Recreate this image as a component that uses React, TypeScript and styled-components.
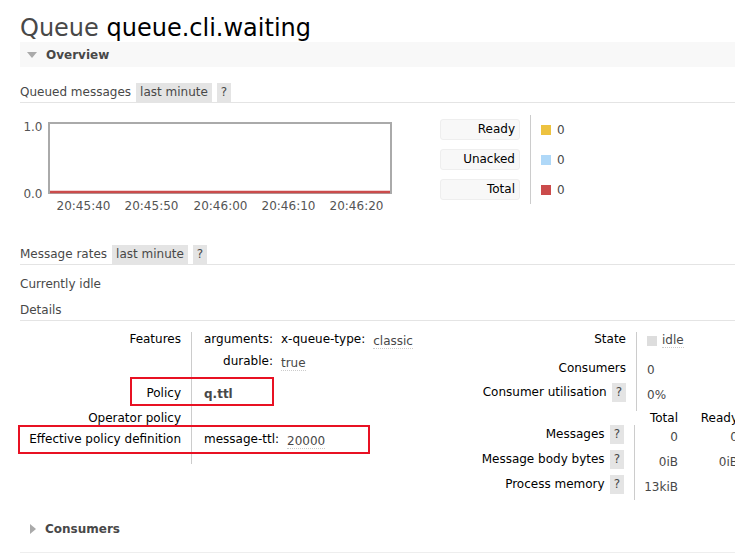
import React from "react";
import styled, { createGlobalStyle } from "styled-components";

const Global = createGlobalStyle`
  html, body { margin: 0; padding: 0; background: #fff; }
  body {
    font-family: "DejaVu Sans", Verdana, sans-serif;
    font-size: 12px;
    color: #484848;
    overflow: hidden;
  }
  * { box-sizing: border-box; }
`;

const Page = styled.div`
  width: 800px;
  padding-left: 20px;
`;

const Title = styled.h1`
  margin: 15px 0 0;
  font-size: 24px;
  line-height: 27px;
  font-weight: normal;
  color: #484848;
`;

const TitleName = styled.span`
  color: #000;
`;

const SectionHead = styled.h2<{ $open?: boolean }>`
  margin: 0;
  height: 25px;
  display: flex;
  align-items: center;
  gap: 9px;
  padding-left: ${(p) => (p.$open ? 7 : 10)}px;
  background: ${(p) => (p.$open ? "#f8f8f8" : "transparent")};
  font-size: 12px;
  line-height: 14px;
  font-weight: bold;
  color: #484848;
`;

const Arrow = styled.span<{ $open?: boolean }>`
  width: 0;
  height: 0;
  border-style: solid;
  ${(p) =>
    p.$open
      ? "border-width: 6px 5px 0 5px; border-color: #aaa transparent transparent transparent;"
      : "border-width: 5.5px 0 5.5px 6px; border-color: transparent transparent transparent #aaa;"}
`;

const SubHead = styled.h3<{ $mt: number }>`
  margin: ${(p) => p.$mt}px 0 0;
  display: flex;
  align-items: center;
  gap: 5px;
  font-size: 12px;
  font-weight: normal;
  line-height: 19px;
  color: #484848;
  border-bottom: 1px solid #e4e4e4;
`;

const Pill = styled.span`
  display: inline-block;
  height: 19px;
  line-height: 19px;
  padding: 0 4px;
  background: #e4e4e4;
  color: #484848;
`;

const Para = styled.p<{ $mt: number }>`
  margin: ${(p) => p.$mt}px 0 0;
  line-height: 14px;
`;

const ChartRow = styled.div`
  display: flex;
  align-items: flex-start;
  gap: 48px;
  margin-top: 12px;
`;

const Legend = styled.div`
  display: flex;
`;

const LegendLabels = styled.div`
  display: flex;
  flex-direction: column;
  gap: 9px;
  padding: 4px 10px 4px 0;
  border-right: 1px solid #ccc;
`;

const LegendLabel = styled.div`
  width: 80px;
  height: 21px;
  line-height: 19px;
  text-align: right;
  padding-right: 4px;
  background: #f8f8f8;
  border: 1px solid #eee;
  border-radius: 3px;
  color: #000;
`;

const LegendValues = styled.div`
  display: flex;
  flex-direction: column;
  gap: 9px;
  padding: 4px 0 4px 10px;
`;

const LegendValue = styled.div`
  height: 21px;
  display: flex;
  align-items: center;
  gap: 6px;
`;

const Swatch = styled.span<{ $c: string }>`
  width: 10px;
  height: 10px;
  background: ${(p) => p.$c};
`;

const Details = styled.div`
  position: relative;
  display: flex;
  align-items: flex-start;
  padding-top: 11px;
`;

const LeftFacts = styled.div`
  width: 450px;
  flex: none;
`;

const RightFacts = styled.div`
  display: flex;
  flex-direction: column;
`;

const FactRow = styled.div<{ $h: number }>`
  display: flex;
  height: ${(p) => p.$h}px;
`;

const FactLabel = styled.div<{ $w: number; $plain?: boolean; $tall?: boolean }>`
  width: ${(p) => p.$w}px;
  flex: none;
  display: flex;
  justify-content: flex-end;
  align-items: flex-start;
  gap: 5px;
  padding-right: 10px;
  border-right: 1px solid ${(p) => (p.$plain ? "transparent" : "#ccc")};
  color: #000;
  line-height: ${(p) => (p.$tall ? 19 : 14)}px;
`;

const FactValue = styled.div<{ $pl: number; $pt?: number; $bold?: boolean }>`
  padding-left: ${(p) => p.$pl}px;
  padding-top: ${(p) => p.$pt ?? 0}px;
  line-height: 14px;
  font-weight: ${(p) => (p.$bold ? "bold" : "normal")};
  color: #484848;
  display: flex;
  align-items: flex-start;
  gap: 5px;
`;

const NumCell = styled.div<{ $w: number; $pt?: number; $head?: boolean }>`
  width: ${(p) => p.$w}px;
  flex: none;
  text-align: right;
  padding-right: 10px;
  padding-top: ${(p) => p.$pt ?? 0}px;
  line-height: 14px;
  white-space: nowrap;
  color: ${(p) => (p.$head ? "#000" : "#484848")};
`;

const Mini = styled.div`
  display: grid;
  grid-template-columns: auto auto;
  column-gap: 8px;
  row-gap: 5px;
  justify-content: start;
`;

const MiniKey = styled.div`
  text-align: right;
  color: #000;
  line-height: 14px;
  white-space: nowrap;
`;

const Abbr = styled.span<{ $mt?: number }>`
  display: block;
  width: fit-content;
  margin-top: ${(p) => p.$mt ?? 3}px;
  line-height: 13px;
  border-bottom: 1px dotted #ccc;
  color: #484848;
  white-space: nowrap;
`;

const StateBox = styled.span`
  width: 10px;
  height: 10px;
  margin-top: 2px;
  background: #ddd;
`;

const Highlight = styled.div<{ $l: number; $t: number; $w: number; $h: number }>`
  position: absolute;
  left: ${(p) => p.$l}px;
  top: ${(p) => p.$t}px;
  width: ${(p) => p.$w}px;
  height: ${(p) => p.$h}px;
  border: 2px solid #e81123;
  pointer-events: none;
`;

const HiddenSection = styled.div`
  margin-top: 16px;
  padding-bottom: 11px;
  border-bottom: 1px solid #eee;
`;

const ChartSvg = styled.svg`
  display: block;
  flex: none;
  font-family: "DejaVu Sans", Verdana, sans-serif;
  font-size: 12px;
`;

const xTicks = [
  { x: 63.5, t: "20:45:40" },
  { x: 131.5, t: "20:45:50" },
  { x: 200.5, t: "20:46:00" },
  { x: 268.5, t: "20:46:10" },
  { x: 336.5, t: "20:46:20" },
];

function Chart() {
  return (
    <ChartSvg width={372} height={100} viewBox="0 0 372 100">
      <rect x={29} y={8} width={342} height={70} fill="#fff" stroke="#aaa" strokeWidth={2} />
      <line x1={30} y1={77} x2={370} y2={77} stroke="#cb4b4b" strokeWidth={2.5} />
      <text x={22.5} y={16} textAnchor="end" fill="#545454">1.0</text>
      <text x={22.5} y={83} textAnchor="end" fill="#545454">0.0</text>
      {xTicks.map((tk) => (
        <text key={tk.t} x={tk.x} y={95} textAnchor="middle" fill="#545454">
          {tk.t}
        </text>
      ))}
    </ChartSvg>
  );
}

const legend = [
  { label: "Ready", color: "#edc240" },
  { label: "Unacked", color: "#afd8f8" },
  { label: "Total", color: "#cb4b4b" },
];

export default function App() {
  return (
    <>
      <Global />
      <Page>
        <Title>
          Queue <TitleName>queue.cli.waiting</TitleName>
        </Title>

        <SectionHead $open>
          <Arrow $open />
          Overview
        </SectionHead>

        <SubHead $mt={16}>
          Queued messages <Pill>last minute</Pill>
          <Pill>?</Pill>
        </SubHead>

        <ChartRow>
          <Chart />
          <Legend>
            <LegendLabels>
              {legend.map((l) => (
                <LegendLabel key={l.label}>{l.label}</LegendLabel>
              ))}
            </LegendLabels>
            <LegendValues>
              {legend.map((l) => (
                <LegendValue key={l.label}>
                  <Swatch $c={l.color} />0
                </LegendValue>
              ))}
            </LegendValues>
          </Legend>
        </ChartRow>

        <SubHead $mt={30}>
          Message rates <Pill>last minute</Pill>
          <Pill>?</Pill>
        </SubHead>

        <Para $mt={12}>Currently idle</Para>

        <SubHead $mt={10}>Details</SubHead>

        <Details>
          <LeftFacts>
            <FactRow $h={54}>
              <FactLabel $w={172}>Features</FactLabel>
              <FactValue $pl={12}>
                <Mini>
                  <MiniKey>arguments:</MiniKey>
                  <Mini>
                    <MiniKey>x-queue-type:</MiniKey>
                    <Abbr>classic</Abbr>
                  </Mini>
                  <MiniKey>durable:</MiniKey>
                  <Abbr>true</Abbr>
                </Mini>
              </FactValue>
            </FactRow>
            <FactRow $h={25}>
              <FactLabel $w={172}>Policy</FactLabel>
              <FactValue $pl={12} $pt={1} $bold>
                q.ttl
              </FactValue>
            </FactRow>
            <FactRow $h={21}>
              <FactLabel $w={172}>Operator policy</FactLabel>
              <FactValue $pl={12} />
            </FactRow>
            <FactRow $h={32}>
              <FactLabel $w={172}>Effective policy definition</FactLabel>
              <FactValue $pl={12}>
                <Mini>
                  <MiniKey>message-ttl:</MiniKey>
                  <Abbr>20000</Abbr>
                </Mini>
              </FactValue>
            </FactRow>
          </LeftFacts>

          <RightFacts>
            <FactRow $h={29}>
              <FactLabel $w={167}>State</FactLabel>
              <FactValue $pl={10} $pt={2}>
                <StateBox />
                <Abbr $mt={0}>idle</Abbr>
              </FactValue>
            </FactRow>
            <FactRow $h={22}>
              <FactLabel $w={167}>Consumers</FactLabel>
              <FactValue $pl={10} $pt={2}>
                0
              </FactValue>
            </FactRow>
            <FactRow $h={28}>
              <FactLabel $w={167} $tall>
                Consumer utilisation <Pill>?</Pill>
              </FactLabel>
              <FactValue $pl={10} $pt={5}>
                0%
              </FactValue>
            </FactRow>

            <FactRow $h={14}>
              <FactLabel $w={165} $plain />
              <NumCell $w={53} $head>
                Total
              </NumCell>
              <NumCell $w={60} $head>
                Ready
              </NumCell>
            </FactRow>
            <FactRow $h={25}>
              <FactLabel $w={165} $tall>
                Messages <Pill>?</Pill>
              </FactLabel>
              <NumCell $w={53} $pt={5}>
                0
              </NumCell>
              <NumCell $w={60} $pt={5}>
                0
              </NumCell>
            </FactRow>
            <FactRow $h={25}>
              <FactLabel $w={165} $tall>
                Message body bytes <Pill>?</Pill>
              </FactLabel>
              <NumCell $w={53} $pt={5}>
                0iB
              </NumCell>
              <NumCell $w={60} $pt={5}>
                0iB
              </NumCell>
            </FactRow>
            <FactRow $h={25}>
              <FactLabel $w={165} $tall>
                Process memory <Pill>?</Pill>
              </FactLabel>
              <NumCell $w={53} $pt={5}>
                13kiB
              </NumCell>
            </FactRow>
          </RightFacts>

          <Highlight $l={110} $t={56} $w={144} $h={29} />
          <Highlight $l={-2} $t={104} $w={352} $h={29} />
        </Details>

        <HiddenSection>
          <SectionHead>
            <Arrow />
            Consumers
          </SectionHead>
        </HiddenSection>
      </Page>
    </>
  );
}
